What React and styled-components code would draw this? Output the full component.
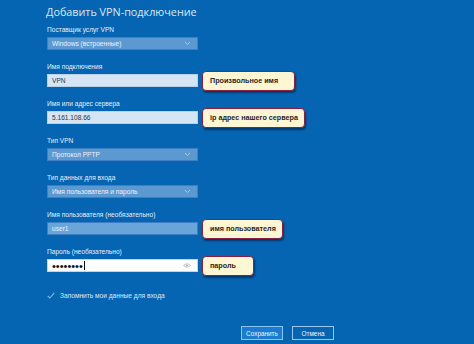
import React from 'react';
import styled, { createGlobalStyle } from 'styled-components';

const GlobalStyle = createGlobalStyle`
  html, body {
    margin: 0;
    padding: 0;
    background: #0565b2;
  }
  body {
    font-family: "Liberation Sans", Arial, sans-serif;
  }
`;

// общий контейнер окна
const Page = styled.div`
  width: 474px;
  height: 344px;
  box-sizing: border-box;
  padding: 2px 0 0 47px;
  background: #0565b2;
  display: flex;
  flex-direction: column;
  overflow: hidden;
`;

const Title = styled.h1`
  margin: 0 0 3px -1px;
  height: 20px;
  line-height: 20px;
  font-family: "Open Sans", "Liberation Sans", sans-serif;
  font-weight: 400;
  font-size: 10.8px;
  color: #dce8f5;
`;

const Field = styled.div`
  display: flex;
  flex-direction: column;
  margin-bottom: 12px;
`;

const Label = styled.div`
  height: 10px;
  line-height: 10px;
  margin-bottom: 2px;
  font-size: 6.6px;
  color: #e6eef8;
`;

const Row = styled.div`
  display: flex;
  align-items: center;
  gap: 4px;
  height: 13px;
`;

const Control = styled.div`
  position: relative;
  box-sizing: border-box;
  width: 151px;
  height: 13px;
  display: flex;
  align-items: center;
  justify-content: space-between;
  padding: 0 6px 0 4px;
  font-size: 6.6px;
  color: ${(p) => (p.$variant === 'light' || p.$variant === 'white' ? '#2a3440' : '#eaf2fa')};
  background: ${(p) =>
    p.$variant === 'light'
      ? '#d6e5f3'
      : p.$variant === 'white'
      ? '#ffffff'
      : p.$variant === 'filled'
      ? '#6aa5d9'
      : '#5d99d1'};
  border: 1px solid
    ${(p) => (p.$variant === 'white' ? '#c8d4e0' : p.$variant === 'light' ? '#b9d0e8' : '#3d7fc2')};
`;

const Chevron = () => (
  <svg width="7" height="5" viewBox="0 0 7 5">
    <polyline points="1,1 3.5,3.5 6,1" fill="none" stroke="#a9c8e6" strokeWidth="1" />
  </svg>
);

const Eye = () => (
  <svg width="8" height="5" viewBox="0 0 8 5">
    <path d="M0.5 2.5 Q4 -0.8 7.5 2.5 Q4 5.8 0.5 2.5 Z" fill="none" stroke="#b4b8bc" strokeWidth="0.8" />
    <circle cx="4" cy="2.5" r="1" fill="#b4b8bc" />
  </svg>
);

const Dots = styled.span`
  display: flex;
  align-items: center;
  font-size: 11px;
  letter-spacing: 0;
  color: #111;
`;

const Caret = styled.span`
  display: inline-block;
  width: 1px;
  height: 9px;
  margin-left: 1px;
  background: #111;
`;

const Callout = styled.div`
  flex: none;
  box-sizing: border-box;
  height: 20px;
  width: ${(p) => p.$w}px;
  display: flex;
  align-items: center;
  padding: 0 7px;
  border: 1.5px solid #8a1f3e;
  border-radius: 4px;
  background: #fff7d4;
  box-shadow: 1px 2px 2px rgba(0, 20, 60, 0.55);
  font-size: 7.2px;
  font-weight: 700;
  color: #262626;
  white-space: nowrap;
`;

const CheckRow = styled.div`
  display: flex;
  align-items: center;
  gap: 5px;
  margin-top: 6px;
  height: 10px;
  font-size: 6.6px;
  color: #dfe9f5;
`;

const Buttons = styled.div`
  display: flex;
  gap: 9px;
  margin: 26px 0 0 194px;
`;

const Button = styled.button`
  box-sizing: border-box;
  width: 42px;
  height: 14px;
  padding: 0;
  font-family: "Liberation Sans", Arial, sans-serif;
  font-size: 6.4px;
  color: #eef5fc;
  background: ${(p) => (p.$primary ? '#1d7ad2' : '#0565b2')};
  border: 1.5px solid ${(p) => (p.$primary ? '#8cc6f4' : '#9cc5ea')};
`;

const fields = [
  { label: 'Имя подключения', value: 'VPN', variant: 'light', note: 'Произвольное имя', w: 93 },
  { label: 'Имя или адрес сервера', value: '5.161.108.66', variant: 'light', note: 'ip адрес нашего сервера', w: 103 },
  { label: 'Тип VPN', value: 'Протокол PPTP', select: true },
  { label: 'Тип данных для входа', value: 'Имя пользователя и пароль', select: true },
  { label: 'Имя пользователя (необязательно)', value: 'user1', variant: 'filled', note: 'имя пользователя', w: 81 },
];

const App = () => {
  return (
    <Page>
      <GlobalStyle />
      <Title>Добавить VPN-подключение</Title>
      <Field>
        <Label>Поставщик услуг VPN</Label>
        <Row>
          <Control>
            <span>Windows (встроенные)</span>
            <Chevron />
          </Control>
        </Row>
      </Field>
      {fields.map((f) => (
        <Field key={f.label}>
          <Label>{f.label}</Label>
          <Row>
            <Control $variant={f.variant}>
              <span>{f.value}</span>
              {f.select && <Chevron />}
            </Control>
            {f.note && <Callout $w={f.w}>{f.note}</Callout>}
          </Row>
        </Field>
      ))}
      <Field>
        <Label>Пароль (необязательно)</Label>
        <Row>
          <Control $variant="white">
            <Dots>
              ••••••••
              <Caret />
            </Dots>
            <Eye />
          </Control>
          <Callout $w={52}>пароль</Callout>
        </Row>
      </Field>
      <CheckRow>
        <svg width="8" height="7" viewBox="0 0 8 7">
          <polyline points="0.7,3.8 2.8,6 7.3,0.8" fill="none" stroke="#7cbcf2" strokeWidth="1.1" />
        </svg>
        <span>Запомнить мои данные для входа</span>
      </CheckRow>
      <Buttons>
        <Button $primary>Сохранить</Button>
        <Button>Отмена</Button>
      </Buttons>
    </Page>
  );
};

export default App;
